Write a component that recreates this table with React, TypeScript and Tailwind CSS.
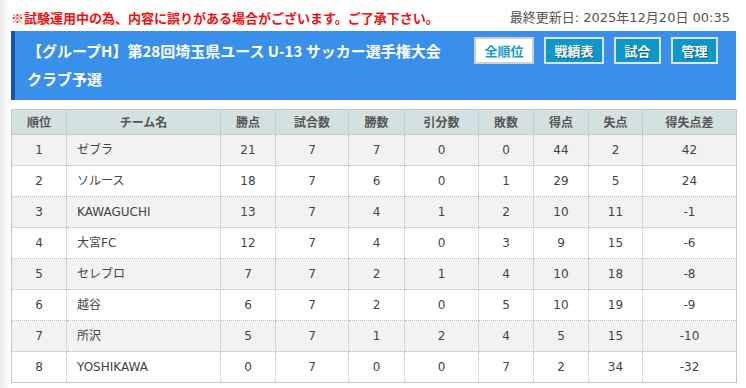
const rows: [number, string, number, number, number, number, number, number, number, number][] = [
  [1, 'ゼブラ', 21, 7, 7, 0, 0, 44, 2, 42],
  [2, 'ソルース', 18, 7, 6, 0, 1, 29, 5, 24],
  [3, 'KAWAGUCHI', 13, 7, 4, 1, 2, 10, 11, -1],
  [4, '大宮FC', 12, 7, 4, 0, 3, 9, 15, -6],
  [5, 'セレブロ', 7, 7, 2, 1, 4, 10, 18, -8],
  [6, '越谷', 6, 7, 2, 0, 5, 10, 19, -9],
  [7, '所沢', 5, 7, 1, 2, 4, 5, 15, -10],
  [8, 'YOSHIKAWA', 0, 7, 0, 0, 7, 2, 34, -32],
];

const heads = ['順位', 'チーム名', '勝点', '試合数', '勝数', '引分数', '敗数', '得点', '失点', '得失点差'];
const widths = [55, 154, 55, 73, 56, 74, 55, 55, 54, 94];

export default function App() {
  return (
    <div className="w-[746px] h-[388px] overflow-hidden bg-[linear-gradient(to_right,#ececec,#ffffff_10px)] pl-[11px] pr-[10px] font-['DejaVu_Sans','Noto_Sans_CJK_JP',sans-serif]">
      {/* notice line */}
      <div className="flex items-center justify-between pt-[9px] pr-[6px] h-[31px] pb-[4px] text-[13px] leading-[18px]">
        <span className="font-bold text-[#ee1111] font-['Noto_Sans_CJK_JP',sans-serif]">
          ※試験運用中の為、内容に誤りがある場合がございます。ご了承下さい。
        </span>
        <span className="text-[#555]">最終更新日: 2025年12月20日 00:35</span>
      </div>

      {/* title box */}
      <div className="flex bg-[#3890ea] border-l-4 border-[#1656a2] h-[69px]">
        <h1 className="flex-1 pl-3 pt-[6px] text-[15px] leading-[28px] font-bold text-white font-['Noto_Sans_CJK_JP',sans-serif]">
          【グループH】第28回埼玉県ユース U-13 サッカー選手権大会
          <br />
          クラブ予選
        </h1>
        <div className="flex gap-[10px] pt-[6px] pr-[18px] font-['Noto_Sans_CJK_JP',sans-serif] text-[13px] font-bold">
          <button className="w-[60px] h-[27px] bg-white border-2 border-[#d0d0d0] text-[#1a9ad2]">全順位</button>
          <button className="w-[60px] h-[27px] bg-[#0d98cb] border-2 border-[#dde3e8] text-white [text-shadow:1px_1px_1px_rgba(0,0,0,0.4)]">戦績表</button>
          <button className="w-[47px] h-[27px] bg-[#0d98cb] border-2 border-[#dde3e8] text-white [text-shadow:1px_1px_1px_rgba(0,0,0,0.4)]">試合</button>
          <button className="w-[47px] h-[27px] bg-[#0d98cb] border-2 border-[#dde3e8] text-white [text-shadow:1px_1px_1px_rgba(0,0,0,0.4)]">管理</button>
        </div>
      </div>

      {/* standings */}
      <table className="mt-[9px] w-[725px] table-fixed border-collapse border border-[#c8c8c8] text-[12px] text-[#444]">
        <colgroup>
          {widths.map((w, i) => (
            <col key={i} style={{ width: w }} />
          ))}
        </colgroup>
        <thead>
          <tr className="h-[25px] bg-[#d4e1e1]">
            {heads.map((h) => (
              <th key={h} className="border border-dotted border-[#bbb] font-bold text-[#555] text-center font-['Noto_Sans_CJK_JP',sans-serif]">
                {h}
              </th>
            ))}
          </tr>
        </thead>
        <tbody>
          {rows.map((r, i) => (
            <tr key={r[0]} className={i % 2 === 0 ? 'h-[31px] bg-[#f2f2f2]' : 'h-[31px] bg-white'}>
              {r.map((v, j) => (
                <td
                  key={j}
                  className={
                    j === 1
                      ? 'border border-dotted border-[#bbb] text-left pl-[10px]'
                      : 'border border-dotted border-[#bbb] text-center'
                  }
                >
                  {v}
                </td>
              ))}
            </tr>
          ))}
        </tbody>
      </table>
    </div>
  );
}
